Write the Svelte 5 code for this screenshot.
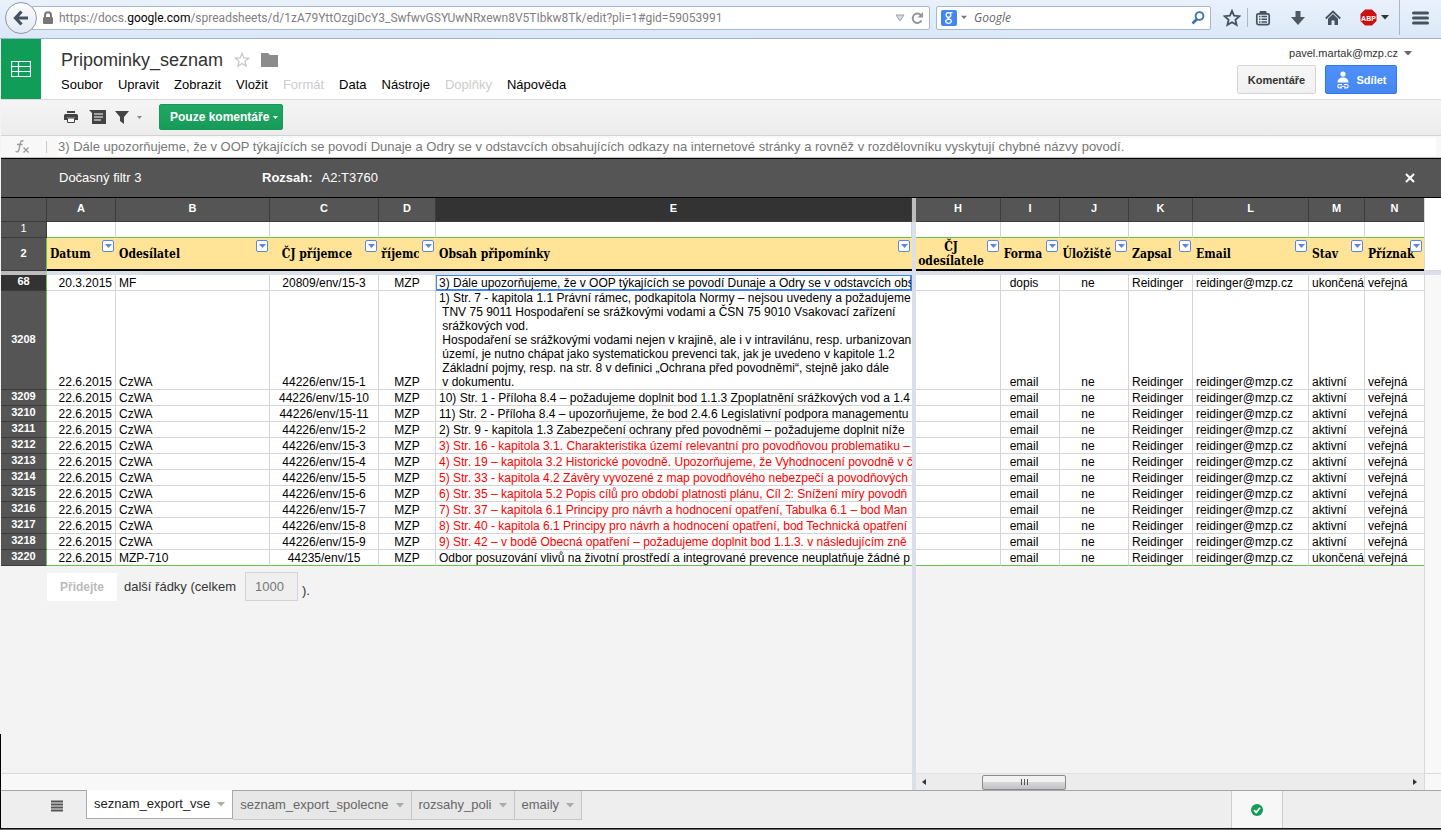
<script>
  const menus = [
    { label: 'Soubor' }, { label: 'Upravit' }, { label: 'Zobrazit' }, { label: 'Vložit' },
    { label: 'Formát', off: true }, { label: 'Data' }, { label: 'Nástroje' },
    { label: 'Doplňky', off: true }, { label: 'Nápověda' }
  ];

  // An entry without a name is the bar that divides frozen and scrolling columns.
  const columns = [
    { id: 'A', w: 69, title: 'Datum' },
    { id: 'B', w: 154, title: 'Odesílatel' },
    { id: 'C', w: 109, title: 'ČJ příjemce', mid: true },
    { id: 'D', w: 57, title: 'Příjemce', mid: true },
    { id: 'E', w: 0, title: 'Obsah připomínky' },
    { id: '', w: 4 },
    { id: 'H', w: 85, title: 'ČJ odesílatele', mid: true, wrap: true },
    { id: 'I', w: 59, title: 'Forma', mid: true },
    { id: 'J', w: 69, title: 'Úložiště', mid: true },
    { id: 'K', w: 64, title: 'Zapsal' },
    { id: 'L', w: 116, title: 'Email' },
    { id: 'M', w: 56, title: 'Stav' },
    { id: 'N', w: 59, title: 'Příznak' }
  ];

  const longNote = [
    '1) Str. 7 - kapitola 1.1 Právní rámec, podkapitola Normy – nejsou uvedeny a požadujeme',
    ' TNV 75 9011 Hospodaření se srážkovými vodami a ČSN 75 9010 Vsakovací zařízení',
    ' srážkových vod.',
    ' Hospodaření se srážkovými vodami nejen v krajině, ale i v intravilánu, resp. urbanizovan',
    ' území, je nutno chápat jako systematickou prevenci tak, jak je uvedeno v kapitole 1.2',
    ' Základní pojmy, resp. na str. 8 v definici „Ochrana před povodněmi“, stejně jako dále',
    ' v dokumentu.'
  ].join('\n');

  const rows = [
    { n: 68, date: '20.3.2015', from: 'MF', ref: '20809/env/15-3', note: '3) Dále upozorňujeme, že v OOP týkajících se povodí Dunaje a Odry se v odstavcích obsahu', form: 'dopis', state: 'ukončená', active: true },
    { n: 3208, ref: '44226/env/15-1', note: longNote },
    { n: 3209, ref: '44226/env/15-10', note: '10) Str. 1 - Příloha 8.4 – požadujeme doplnit bod 1.1.3 Zpoplatnění srážkových vod a 1.4' },
    { n: 3210, ref: '44226/env/15-11', note: '11) Str. 2 - Příloha 8.4 – upozorňujeme, že bod 2.4.6 Legislativní podpora managementu' },
    { n: 3211, ref: '44226/env/15-2', note: '2) Str. 9 - kapitola 1.3 Zabezpečení ochrany před povodněmi – požadujeme doplnit níže' },
    { n: 3212, ref: '44226/env/15-3', red: true, note: '3) Str. 16 - kapitola 3.1. Charakteristika území relevantní pro povodňovou problematiku –' },
    { n: 3213, ref: '44226/env/15-4', red: true, note: '4) Str. 19 – kapitola 3.2 Historické povodně. Upozorňujeme, že Vyhodnocení povodně v č' },
    { n: 3214, ref: '44226/env/15-5', red: true, note: '5) Str. 33 - kapitola 4.2 Závěry vyvozené z map povodňového nebezpečí a povodňových ri' },
    { n: 3215, ref: '44226/env/15-6', red: true, note: '6) Str. 35 – kapitola 5.2 Popis cílů pro období platnosti plánu, Cíl 2: Snížení míry povodň' },
    { n: 3216, ref: '44226/env/15-7', red: true, note: '7) Str. 37 – kapitola 6.1 Principy pro návrh a hodnocení opatření, Tabulka 6.1 – bod Man' },
    { n: 3217, ref: '44226/env/15-8', red: true, note: '8) Str. 40 - kapitola 6.1 Principy pro návrh a hodnocení opatření, bod Technická opatření' },
    { n: 3218, ref: '44226/env/15-9', red: true, note: '9) Str. 42 – v bodě Obecná opatření – požadujeme doplnit bod 1.1.3. v následujícím zně' },
    { n: 3220, from: 'MZP-710', ref: '44235/env/15', state: 'ukončená', note: 'Odbor posuzování vlivů na životní prostředí a integrované prevence neuplatňuje žádné p' }
  ];

  const tabs = ['seznam_export_vse', 'seznam_export_spolecne', 'rozsahy_poli', 'emaily'];
</script>

{#snippet caret()}
  <svg class="caret" width="8" height="5" viewBox="0 0 8 5" aria-hidden="true"><path d="M0 0h8L4 4.5z" fill="currentColor" /></svg>
{/snippet}

<div class="page">
  <div class="browser">
    <button class="back" aria-label="Zpět">
      <svg width="16" height="16" viewBox="0 0 16 16"><path d="M8.5 1.5 2.5 8l6 6.500M3 8h12" fill="none" stroke="#46525f" stroke-width="3.200" /></svg>
    </button>
    <div class="url">
      <svg width="12" height="14" viewBox="0 0 12 14"><path d="M3 7V4.200a3 3 0 0 1 6 0V7" fill="none" stroke="#777" stroke-width="2" /><rect x="1" y="6" width="10" height="7" rx="1" fill="#777" /></svg>
      <span class="address" role="textbox" aria-label="Adresa" tabindex="0">https://docs.<b>google.com</b>/spreadsheets/d/1zA79YttOzgiDcY3_SwfwvGSYUwNRxewn8V5TIbkw8Tk/edit?pli=1#gid=59053991</span>
      <svg width="10" height="8" viewBox="0 0 10 8"><path d="M1 1h8L5 7z" fill="#d5dae0" stroke="#9aa4ae" /></svg>
      <svg width="14" height="14" viewBox="0 0 14 14"><path d="M11.500 9.500a4.700 4.700 0 1 1-.3-5" fill="none" stroke="#8e979f" stroke-width="2" /><path d="M13 1v5.500H7.500z" fill="#8e979f" /></svg>
    </div>
    <div class="search">
      <svg width="16" height="16" viewBox="0 0 16 16"><rect width="16" height="16" rx="2" fill="#4285f4" /><g fill="none" stroke="#fff" stroke-width="1.300"><ellipse cx="7.500" cy="5" rx="2.300" ry="2.400" /><path d="M9 2.700h2.500M7.500 7.400c-2.600 1.300 2.800 1.400 2.900 3.700.1 2.900-5.800 2.800-5.800.2 0-1.500 2-2 3.700-2" /></g></svg>
      <i class="dim">{@render caret()}</i>
      <input aria-label="Hledat" placeholder="Google" />
      <svg width="14" height="14" viewBox="0 0 14 14"><circle cx="8.500" cy="5" r="3.900" fill="none" stroke="#3b74ad" stroke-width="1.900" /><path d="M6 8 1.500 12.500" stroke="#3b74ad" stroke-width="2.600" /></svg>
    </div>
    <div class="tools">
      <button aria-label="Záložka"><svg width="18" height="18" viewBox="0 0 18 18"><path d="m9 1.800 2.100 4.900 5.300.5-4 3.500 1.200 5.200L9 13.200l-4.600 2.700 1.200-5.200-4-3.500 5.300-.5z" fill="none" stroke="#46525f" stroke-width="1.800" /></svg></button>
      <span class="rule short"></span>
      <button aria-label="Seznam záložek"><svg width="16" height="16" viewBox="0 0 16 16"><rect x="1.800" y="3.800" width="12.400" height="10.800" rx="1.500" fill="none" stroke="#46525f" stroke-width="1.700" /><path d="M5 3V1.500h6V3z" fill="#46525f" stroke="#46525f" /><path d="M4 6.500h1.500M4 9.200h1.500M4 12h1.500M6.500 6.500H12M6.500 9.200H12M6.500 12H12" stroke="#46525f" stroke-width="1.400" /></svg></button>
      <button aria-label="Stahování"><svg width="16" height="16" viewBox="0 0 16 16"><path d="M5.500 1h5v6H15l-7 8-7-8h4.500z" fill="#4d5864" /></svg></button>
      <button aria-label="Domů"><svg width="16" height="16" viewBox="0 0 16 16"><path d="M.8 8.500 8 1.500l7.200 7" fill="none" stroke="#46525f" stroke-width="1.800" /><path d="M3 8.800 8 4l5 4.800V15H9.500v-4.500h-3V15H3z" fill="#46525f" /></svg></button>
      <button class="abp" aria-label="Adblock Plus"><svg width="17" height="17" viewBox="0 0 17 17"><path d="M5 .5h7L16.500 5v7L12 16.500H5L.5 12V5z" fill="#cc1010" /><text x="8.500" y="11.500" text-anchor="middle" fill="#fff" font-family="Liberation Sans, sans-serif" font-size="7" font-weight="700">ABP</text></svg>{@render caret()}</button>
      <span class="rule"></span>
      <button aria-label="Nabídka"><svg width="17" height="14" viewBox="0 0 17 14"><path d="M1.500 2h14M1.500 7h14M1.500 12h14" stroke="#46525f" stroke-width="3" stroke-linecap="round" /></svg></button>
    </div>
  </div>

  <header>
    <a class="logo" href="#domu" aria-label="Tabulky">
      <svg width="20" height="16" viewBox="0 0 20 16"><path d="M.5.5h19v15H.5zM.5 5.500h19M.5 10.500h19M7.500.5v15" fill="none" stroke="#fff" stroke-width="1.200" /></svg>
    </a>
    <div class="doc">
      <div class="title">
        <h1>Pripominky_seznam</h1>
        <svg width="16" height="16" viewBox="0 0 16 16"><path d="m8 1.300 1.800 4.600 4.900.3-3.800 3.200 1.300 4.800L8 11.500l-4.200 2.700 1.300-4.800-3.800-3.200 4.900-.3z" fill="none" stroke="#c4c4c4" stroke-width="1.200" /></svg>
        <svg width="17" height="14" viewBox="0 0 17 14"><path d="M0 0h7l2 2h8v12H0z" fill="#8b8b8b" /></svg>
      </div>
      <nav>
        {#each menus as m}<button disabled={m.off}>{m.label}</button>{/each}
      </nav>
    </div>
    <div class="account">
      <button class="user">pavel.martak@mzp.cz {@render caret()}</button>
      <div class="actions">
        <button class="light">Komentáře</button>
        <button class="share">
          <svg width="14" height="18" viewBox="0 0 14 18"><circle cx="7" cy="3" r="2.600" fill="#fff" /><path d="M1.500 11.500C1.500 8 4 6.500 7 6.500s5.500 1.500 5.500 5z" fill="#fff" /><path d="M6 13.500H3.500a1.700 1.700 0 0 0 0 3.400H6M8 13.500h2.500a1.700 1.700 0 0 1 0 3.400H8M4.500 15.200h5" fill="none" stroke="#fff" stroke-width="1.100" /></svg>
          Sdílet
        </button>
      </div>
    </div>
  </header>

  <div class="toolbar">
    <button aria-label="Tisk"><svg width="14" height="12" viewBox="0 0 14 12"><path d="M3 0h8v2H3zM1.500 3h11A1.500 1.500 0 0 1 14 4.500V9h-3V6.500H3V9H0V4.500A1.500 1.500 0 0 1 1.500 3z" fill="#444" /><path d="M3.500 7h7v4.500h-7z" fill="#fff" stroke="#444" /></svg></button>
    <button aria-label="Komentář"><svg width="17" height="14" viewBox="0 0 17 14"><path d="M0 0h17v14H3V3z" fill="#444" /><path d="M5 4h9M5 7h9M5 10h7" stroke="#fff" stroke-width="1.200" /></svg></button>
    <button class="funnel" aria-label="Filtr"><svg width="14" height="13" viewBox="0 0 14 13"><path d="M0 0h14L9 6v7l-4-3V6z" fill="#444" /></svg><svg width="5" height="3" viewBox="0 0 5 3"><path d="M0 0h5L2.500 3z" fill="#888" /></svg></button>
    <button class="green">Pouze komentáře <svg width="5" height="3" viewBox="0 0 5 3"><path d="M0 0h5L2.500 3z" fill="#fff" /></svg></button>
  </div>

  <div class="formula">
    <label for="fx"><svg width="18" height="16" viewBox="0 0 18 16"><path d="M9.500 2.200C7 .8 6.500 3 6 5.500L5 10.500c-.4 2-1.500 3-3.500 2M3 5.500h5.500M9.500 8.500l5 5M14.500 8.500l-5 5" fill="none" stroke="#999" stroke-width="1.300" /></svg></label>
    <span class="bar"></span>
    <input id="fx" aria-label="Vzorec" value="3) Dále upozorňujeme, že v OOP týkajících se povodí Dunaje a Odry se v odstavcích obsahujících odkazy na internetové stránky a rovněž v rozdělovníku vyskytují chybné názvy povodí." />
  </div>

  <div class="filterbar">
    <span class="name">Dočasný filtr 3</span>
    <b>Rozsah:</b>
    <span>A2:T3760</span>
    <button aria-label="Zavřít"><svg width="10" height="10" viewBox="0 0 10 10"><path d="m1 1 8 8M9 1 1 9" stroke="#fff" stroke-width="2" /></svg></button>
  </div>

  <main>
    <table id="sheet">
      <colgroup>
        <col style:width="46px" />
        {#each columns as c}<col style:width={c.w ? c.w + 'px' : 'auto'} />{/each}
      </colgroup>
      <thead>
        <tr class="letters">
          <th></th>
          {#each columns as c}<th class:split={!c.id} class:on={c.id === 'E'}>{c.id}</th>{/each}
        </tr>
      </thead>
      <tbody>
        <tr class="blank">
          <th>1</th>
          {#each columns as c}<td class:split={!c.id}></td>{/each}
        </tr>
        <tr class="titles">
          <th>2</th>
          {#each columns as c}
            {#if c.id}
              <td>
                <div class="head" class:mid={c.mid} class:wrap={c.wrap}>
                  <span>{c.title}</span>
                  <button aria-label={'Filtr ' + c.title}><svg width="7" height="4" viewBox="0 0 7 4"><path d="M0 0h7L3.500 4z" fill="#5c85e6" /></svg></button>
                </div>
              </td>
            {:else}<td class="split"></td>{/if}
          {/each}
        </tr>
        <tr class="gap"><th></th><td colspan={columns.length}></td></tr>
        {#each rows as r}
          <tr class:active={r.active} class:last={r.n === 3220}>
            <th>{r.n}</th>
            <td class="right">{r.date ?? '22.6.2015'}</td>
            <td>{r.from ?? 'CzWA'}</td>
            <td class="mid">{r.ref}</td>
            <td class="mid">MZP</td>
            <td class="note" class:red={r.red}>{r.note}</td>
            <td class="split"></td>
            <td></td>
            <td class="mid inset">{r.form ?? 'email'}</td>
            <td class="mid inset">ne</td>
            <td>Reidinger</td>
            <td>reidinger@mzp.cz</td>
            <td>{r.state ?? 'aktivní'}</td>
            <td>veřejná</td>
          </tr>
        {/each}
      </tbody>
    </table>
    <div class="more">
      <button disabled>Přidejte</button>
      <label for="count">další řádky (celkem</label>
      <input id="count" value="1000" />
      <span>).</span>
    </div>
    <div class="divider"></div>
    <div class="side"><i></i></div>
    <div class="pane"></div>
    <div class="scroll" role="scrollbar" aria-label="Posun" aria-controls="sheet" aria-valuenow="14" tabindex="0">
      <svg width="4" height="6" viewBox="0 0 4 6"><path d="M4 0v6L0 3z" fill="#333" /></svg>
      <div class="track"><div class="thumb"><i></i><i></i><i></i></div></div>
      <svg width="4" height="6" viewBox="0 0 4 6"><path d="M0 0v6l4-3z" fill="#333" /></svg>
    </div>
    <div class="corner"></div>
  </main>

  <footer>
    <button class="all" aria-label="Všechny listy"><svg width="12" height="12" viewBox="0 0 12 12"><path d="M0 1.500h12M0 4.500h12M0 7.500h12M0 10.500h12" stroke="#555" stroke-width="2" /></svg></button>
    {#each tabs as t, i}
      <button class="tab" class:current={i === 0}>{t}{@render caret()}</button>
    {/each}
    <div class="status">
      <svg width="12" height="12" viewBox="0 0 12 12"><circle cx="6" cy="6" r="6" fill="#0f9d58" /><path d="m3 6.200 2.200 2.200L9 3.800" fill="none" stroke="#fff" stroke-width="1.700" /></svg>
    </div>
  </footer>
</div>

<style>
  :global(body) { margin: 0; }
  .page, .page * { box-sizing: border-box; }
  .page {
    min-height: 100vh;
    display: flex;
    flex-direction: column;
    padding-left: 1px;
    font: 13px/16px "Liberation Sans", Arial, sans-serif;
    color: #000;
    background: linear-gradient(#000, #000) left bottom / 1px 95px no-repeat #f3f3f3;
    border-bottom: 1px solid #666;
  }
  button, input { font: inherit; color: inherit; border: 0; padding: 0; margin: 0; background: none; }
  button { display: flex; align-items: center; justify-content: center; white-space: nowrap; }
  input { min-width: 0; outline: 0; }
  svg { display: block; flex: none; }

  .browser {
    height: 39px;
    display: flex;
    align-items: center;
    margin-left: -1px;
    padding: 0 12px 3px 5px;
    background: linear-gradient(#e9f1fb, #dbe8f8);
    border-bottom: 1px solid #a3b3c7;
    font: 12px/18px "Open Sans", sans-serif;
  }
  .back {
    width: 32px;
    height: 32px;
    border: 1px solid #8b98a8;
    border-radius: 50%;
    background: linear-gradient(#fbfcfe, #e3eaf3);
    z-index: 1;
  }
  .url, .search {
    height: 24px;
    display: flex;
    align-items: center;
    background: #fff;
    border: 1px solid #a9b8c8;
    border-radius: 2px;
  }
  .url { flex: 1; min-width: 0; margin-left: -6px; padding: 0 5px 0 10px; gap: 5px; }
  .address { flex: 1; min-width: 0; overflow: hidden; white-space: nowrap; color: #808080; font-family: Roboto, sans-serif; }
  .address b { font-weight: 400; color: #000; }
  .search { width: 275px; margin-left: 6px; padding: 0 5px 0 4px; gap: 4px; }
  .search input { flex: 1; padding-left: 3px; }
  .search input::placeholder { color: #666; font-style: italic; opacity: 1; }
  .dim { color: #777; }
  .dim .caret, .search .caret { width: 6px; }
  .tools { display: flex; align-items: center; margin-left: 12px; height: 35px; }
  .rule { width: 1px; height: 35px; background: #a9b8c8; margin: 0 12px 0 10px; }
  .rule.short { height: 19px; margin: 0 7px 0 6px; }
  .tools button + button { margin-left: 19px; }
  .abp { gap: 4px; color: #333; }

  header { display: flex; height: 61px; background: #fff; border-bottom: 1px solid #d9d9d9; }
  .logo { width: 40px; height: 60px; background: #0f9d58; display: grid; place-items: center; }
  .doc { padding: 10px 0 0 20px; }
  .title { display: flex; align-items: center; gap: 11px; }
  h1 { margin: 0; font-size: 18px; font-weight: 400; line-height: 22px; color: #333; }
  nav { display: flex; gap: 15px; margin-top: 6px; }
  nav button:disabled { color: #ccc; }
  .account { margin-left: auto; padding-right: 29px; display: flex; flex-direction: column; align-items: flex-end; }
  .user { font-size: 11px; color: #333; gap: 6px; margin-top: 6px; height: 16px; }
  .user .caret { color: #666; }
  .actions { display: flex; gap: 9px; margin: 4px 15px 0 0; }
  .actions button { height: 29px; border-radius: 2px; font-weight: 700; font-size: 11px; }
  .light { width: 79px; border: 1px solid #d5d5d5; background: linear-gradient(#f6f6f6, #f1f1f1); color: #333; }
  .share { width: 72px; gap: 7px; border: 1px solid #3079ed; background: linear-gradient(#4d90fe, #4787ed); color: #fff; }

  .toolbar {
    height: 36px;
    display: flex;
    align-items: center;
    padding: 0 0 1px 63px;
    gap: 11px;
    background: linear-gradient(#f5f5f5, #ececec);
    border-bottom: 1px solid #d3d3d3;
  }
  .funnel { gap: 8px; margin-left: -2px; }
  .green {
    height: 26px;
    margin-left: 6px;
    padding: 0 4px 0 10px;
    gap: 4px;
    border: 1px solid #17975a;
    border-radius: 2px;
    background: linear-gradient(#1fa864, #189a59);
    color: #fff;
    font-size: 12px;
    font-weight: 700;
  }

  .formula { height: 22px; display: flex; align-items: center; padding: 0 5px 0 13px; background: #f8f8f8; border-bottom: 1px solid #c4c4c4; }
  .bar { width: 1px; height: 12px; background: #ccc; margin: 0 0 0 14px; }
  .formula input { flex: 1; height: 18px; margin-left: 11px; color: #777; background: #fff; }

  .filterbar {
    height: 40px;
    display: flex;
    align-items: center;
    padding: 0 26px 0 58px;
    background: #555;
    color: #fff;
    border: solid #000;
    border-width: 1px 0;
  }
  .filterbar .name { width: 203px; }
  .filterbar b { margin-right: 9px; }
  .filterbar button { margin-left: auto; }

  main {
    flex: 1;
    display: grid;
    grid-template-columns: minmax(0, 1fr) 4px 508px 17px;
    grid-template-rows: auto 1fr 17px;
    background: #f3f3f3;
  }
  table { grid-area: 1 / 1 / 2 / 4; width: 100%; table-layout: fixed; border-collapse: separate; border-spacing: 0; font-size: 12px; }
  td, th { height: 16px; padding: 0 3px; border: solid #d4d4d4; border-width: 0 1px 1px 0; white-space: nowrap; }
  td { background: #fff; vertical-align: bottom; line-height: 14px; }
  td:last-child, th:last-child { border-right: 0; }
  th { padding-bottom: 2px; background: #555; color: #fff; font-size: 11px; line-height: 13px; font-weight: 700; border-color: #3c3c3c; }
  tbody th { border-right-color: #6cc04a; }
  .letters th { height: 24px; padding-bottom: 3px; }
  .letters .on { background: #333; }
  .blank th { font-weight: 400; border-right-color: #3c3c3c; }
  .blank td { border-bottom-color: #6cc04a; }
  td.split { background: #dadfe8; border: 0; padding: 0; }
  th.split { background: #bdbdbd; border: 0; padding: 0; }
  .titles td { height: 33px; padding: 0; background: #ffe498; border: solid #000; border-width: 0 0 2px; }
  .titles td.split { background: #dadfe8; border: 0; }
  .head { position: relative; height: 31px; display: flex; align-items: center; padding: 0 15px 0 3px; font: 700 12px/14px "DejaVu Serif Condensed", "DejaVu Serif", serif; }
  .head.mid { justify-content: center; padding: 0 17px 0 2px; }
  .head.mid span { min-width: 0; overflow-x: clip; display: flex; justify-content: center; text-align: center; }
  .head.wrap span { white-space: normal; }
  .head button { position: absolute; top: 2px; right: 2px; width: 12px; height: 12px; background: #fff; border: 1px solid #5c85e6; border-radius: 2px; }
  .gap td, .gap th { height: 4px; padding: 0; border: 0; background: #dadfe8; line-height: 0; }
  .gap th { background: #bdbdbd; }
  .right { text-align: right; }
  .mid { text-align: center; }
  .inset { padding-right: 15px; }
  .note { overflow: hidden; white-space: pre; border-right: 0; }
  .red { color: #f00; }
  .active th { background: #333; }
  .active .note { box-shadow: inset 0 0 0 1px #4285f4; border-bottom-color: #4285f4; border-right: 1px solid #4285f4; }
  .last td:not(.split) { border-bottom-color: #6cc04a; }

  .more { grid-area: 2 / 1; display: flex; align-items: center; align-self: start; padding: 6px 0 0 46px; color: #333; }
  .more button { width: 70px; height: 28px; background: #fff; color: #bbb; font-size: 12px; font-weight: 700; }
  .more label { margin: 0 9px 0 7px; }
  .more input { width: 53px; height: 29px; padding-left: 9px; border: 1px solid #d4d4d4; background: #efefef; color: #777; }
  .more span { margin: 8px 0 0 4px; }
  .divider { grid-area: 2 / 2 / 4 / 3; background: #dadfe8; }
  .side { grid-area: 1 / 4 / 3 / 5; background: #f8f8f8; border-left: 1px solid #d9d9d9; }
  .side i { display: block; height: 77px; background: linear-gradient(#fff 72px, #d9d9d9 72px, #d9d9d9 73px, #dadfe8 73px); }
  .pane, .corner { background: #f8f8f8; border-top: 1px solid #d9d9d9; }
  .pane { grid-area: 3 / 1; }
  .corner { grid-area: 3 / 4; border-left: 1px solid #d9d9d9; }
  .scroll { grid-area: 3 / 3; display: flex; align-items: center; padding: 0 7px 0 6px; background: #ececec; border-top: 1px solid #e2e2e2; }
  .track { flex: 1; padding-left: 56px; }
  .thumb { width: 84px; height: 15px; display: flex; align-items: center; justify-content: center; gap: 2px; border: 1px solid #8a8a8a; border-radius: 2px; background: linear-gradient(#f2f2f2 45%, #d6d6d8 50%, #c2c2c6); }
  .thumb i { width: 1px; height: 6px; background: #555; }

  footer { height: 39px; display: flex; align-items: flex-start; background: #eee; border-top: 1px solid #a6a6a6; border-bottom: 1px solid #111; padding-left: 49px; }
  .all { width: 14px; height: 30px; margin-right: 22px; }
  .tab { height: 29px; gap: 7px; padding: 0 7px; background: #e7e7e7; color: #666; border: solid #c6c6c6; border-width: 0 1px 1px 0; }
  .tab :global(.caret) { color: #aaa; }
  .current { margin-top: -1px; background: #fff; color: #222; border: 1px solid #aaa; border-top: 0; }
  .status { margin-left: auto; margin-right: 158px; width: 52px; height: 100%; display: grid; place-items: center; background: #f7f7f7; border: solid #ccc; border-width: 0 1px; }
</style>
